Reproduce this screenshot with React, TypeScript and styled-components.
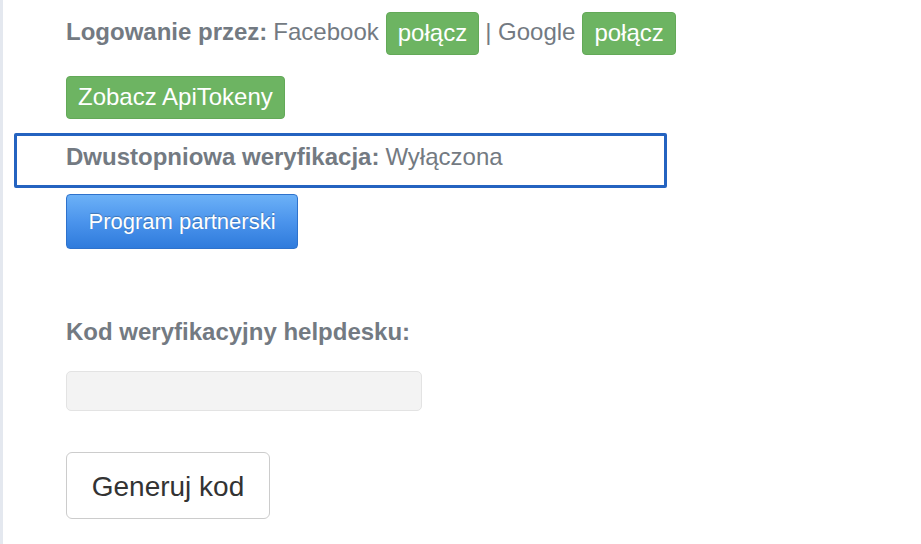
import React from "react";
import styled, { createGlobalStyle } from "styled-components";

const GlobalStyle = createGlobalStyle`
  html, body {
    margin: 0;
    padding: 0;
    background: #ffffff;
  }
  body {
    font-family: "Liberation Sans", Arial, Helvetica, sans-serif;
  }
`;

const colors = {
  text: "#737a82",
  green: "#6db462",
  greenBorder: "#63a958",
  focus: "#2463c0",
  strip: "#e4e8ef",
};

const App: React.FC = () => {
  return (
    <>
      <GlobalStyle />
      <Page>
        <Content>
          <Row>
            <Label>Logowanie przez:</Label>
            <Value>Facebook</Value>
            <GreenButton>połącz</GreenButton>
            <Value>| Google</Value>
            <GreenButton>połącz</GreenButton>
          </Row>

          <Row $top={21}>
            <GreenButton>Zobacz ApiTokeny</GreenButton>
          </Row>

          <FocusBox>
            <Label>Dwustopniowa weryfikacja:</Label>
            <Value>Wyłączona</Value>
          </FocusBox>

          <BlueButton>Program partnerski</BlueButton>

          <FieldLabel>Kod weryfikacyjny helpdesku:</FieldLabel>
          <CodeInput readOnly />

          <PlainButton>Generuj kod</PlainButton>
        </Content>
      </Page>
    </>
  );
};

const Page = styled.div`
  min-height: 544px;
  border-left: 3px solid ${colors.strip};
  box-sizing: border-box;
`;

const Content = styled.div`
  display: flex;
  flex-direction: column;
  align-items: flex-start;
  padding: 12px 0 0 63px;
`;

const Row = styled.div<{ $top?: number }>`
  display: flex;
  align-items: center;
  gap: 6px;
  margin-top: ${(p) => p.$top ?? 0}px;
  font-size: 24px;
  color: ${colors.text};
`;

const Label = styled.span`
  font-weight: 700;
  font-size: 24px;
  color: ${colors.text};
  margin-bottom: 3px;
`;

const Value = styled.span`
  font-size: 24px;
  color: ${colors.text};
  margin: 0 1px 3px 0;
`;

const GreenButton = styled.button`
  height: 43px;
  padding: 0 11px 2px;
  background: ${colors.green};
  border: 1px solid ${colors.greenBorder};
  border-radius: 4px;
  color: #ffffff;
  font-family: inherit;
  font-size: 24px;
  cursor: pointer;
`;

const FocusBox = styled.div`
  display: flex;
  align-items: center;
  gap: 6px;
  box-sizing: border-box;
  width: 653px;
  height: 55px;
  margin: 14px 0 0 -52px;
  padding: 0 0 5px 49px;
  border: 3px solid ${colors.focus};
  border-radius: 2px;
`;

const BlueButton = styled.button`
  margin-top: 6px;
  width: 232px;
  height: 55px;
  background: linear-gradient(to bottom, #6cb1f7 0%, #4b94ec 50%, #2f7bdc 100%);
  border: 1px solid #2e72cc;
  border-radius: 4px;
  color: #ffffff;
  font-family: inherit;
  font-size: 22px;
  text-shadow: 0 -1px 1px rgba(0, 0, 0, 0.25);
  cursor: pointer;
`;

const FieldLabel = styled.div`
  margin-top: 69px;
  font-size: 24px;
  font-weight: 700;
  color: ${colors.text};
`;

const CodeInput = styled.input`
  margin-top: 25px;
  box-sizing: border-box;
  width: 356px;
  height: 40px;
  background: #f3f3f3;
  border: 1px solid #e3e3e3;
  border-radius: 5px;
  outline: none;
`;

const PlainButton = styled.button`
  margin-top: 41px;
  width: 204px;
  height: 67px;
  padding-top: 4px;
  background: #ffffff;
  border: 1px solid #cccccc;
  border-radius: 6px;
  color: #333333;
  font-family: inherit;
  font-size: 28px;
  cursor: pointer;
`;

export default App;
